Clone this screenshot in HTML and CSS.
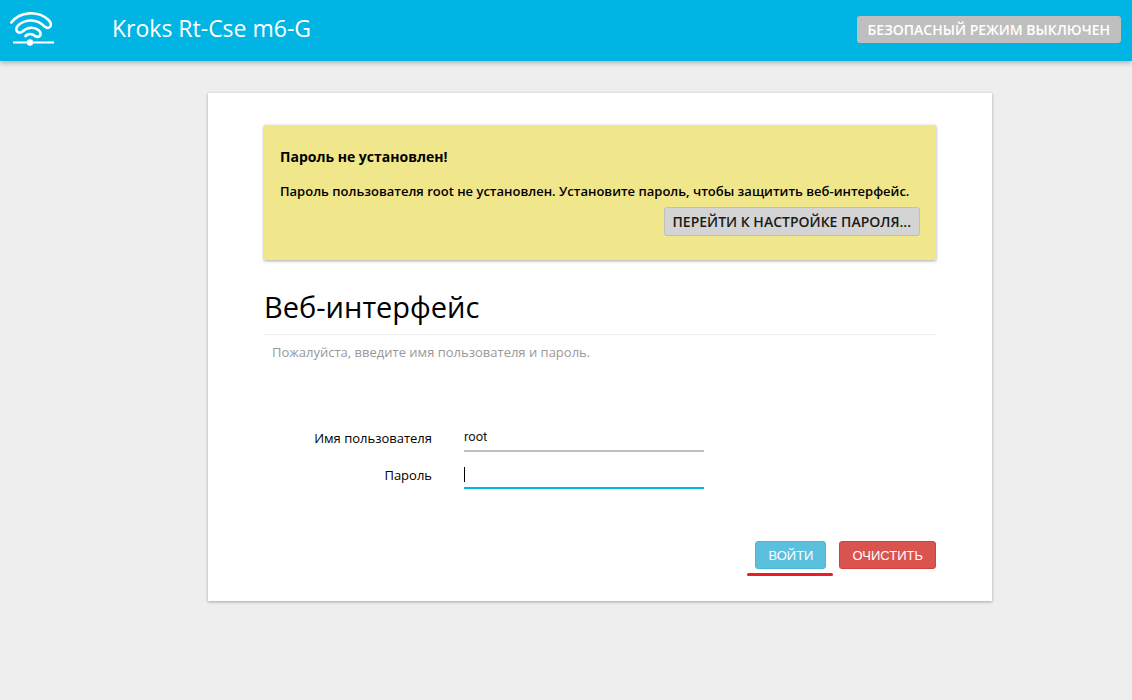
FILE: index.html
```html
<!DOCTYPE html>
<html lang="ru">
<head>
<meta charset="utf-8">
<meta name="viewport" content="width=device-width, initial-scale=1">
<title>Kroks Rt-Cse m6-G</title>
<link rel="stylesheet" href="styles.css">
</head>
<body>
<header class="topbar">
  <svg class="logo" viewBox="0 0 48 36" aria-hidden="true">
    <g fill="none" stroke="#fff" stroke-width="2.6" stroke-linecap="round" stroke-linejoin="round">
      <path d="M2.300 12.500C11 1.200 29 0.200 39.500 10C44.500 15 40.500 20.500 35.500 16.500C28 9 17.500 8.700 9.500 15C5 19.500 8.500 25 13.500 21.500C18.500 16.700 25.500 16.700 30 20.500C33.500 24.500 30.500 28.500 26 26C23 23.500 19 23.500 16.500 26"/>
      <path stroke-width="2" stroke-linecap="butt" d="M4 32.500H45"/>
    </g>
    <circle cx="21" cy="32.500" r="3.200" fill="#fff"/>
  </svg>
  <a class="brand" href="#">Kroks Rt-Cse m6-G</a>
  <a class="mode" href="#">БЕЗОПАСНЫЙ РЕЖИМ ВЫКЛЮЧЕН</a>
</header>
<main class="page">
  <div class="card">
    <section class="alert">
      <h4 class="alert-title">Пароль не установлен!</h4>
      <p class="alert-text">Пароль пользователя root не установлен. Установите пароль, чтобы защитить веб-интерфейс.</p>
      <a class="alert-button" href="#">ПЕРЕЙТИ К НАСТРОЙКЕ ПАРОЛЯ...</a>
    </section>
    <form class="login">
      <h2 class="title">Веб-интерфейс</h2>
      <p class="hint">Пожалуйста, введите имя пользователя и пароль.</p>
      <div class="fields">
        <label class="label" for="user">Имя пользователя</label>
        <input class="input" id="user" type="text" value="root">
        <label class="label" for="password">Пароль</label>
        <input class="input input-active" id="password" type="password">
      </div>
      <div class="actions">
        <button class="button button-apply" type="submit">ВОЙТИ</button>
        <button class="button button-reset" type="reset">ОЧИСТИТЬ</button>
      </div>
    </form>
  </div>
</main>
</body>
</html>
```
FILE: styles.css
```css
* { box-sizing: border-box; }
body {
  margin: 0;
  min-height: 100vh;
  background: #eee;
  color: #000;
  font: 13px/20px "Open Sans", "Noto Sans", sans-serif;
}
.topbar {
  display: flex;
  align-items: center;
  padding: 10px 11px 15px 9px;
  background: #00b5e4;
  box-shadow: 0 2px 5px rgba(0, 0, 0, .26);
}
.logo { width: 48px; height: 36px; }
.brand {
  margin-left: 55px;
  color: #fff;
  font-size: 23px;
  line-height: 32px;
  text-decoration: none;
}
.mode {
  margin: 2px 0 0 auto;
  padding: 4px 11px 3px;
  border-radius: 3px;
  background: #bfbfbf;
  color: #fff;
  font-size: 14px;
  font-weight: 600;
  text-decoration: none;
}
.page { padding: 32px 140px 32px 208px; }
.card {
  padding: 32px 56px;
  background: #fff;
  box-shadow: 0 1px 3px rgba(0, 0, 0, .3);
}
.alert {
  display: flex;
  flex-direction: column;
  padding: 22px 16px 24px;
  background: #f0e68c;
  box-shadow: 0 1px 3px rgba(0, 0, 0, .35);
}
.alert-title { margin: 0 0 14px; font-size: 14px; font-weight: 700; }
.alert-text { margin: 0 0 6px; font-weight: 600; }
.alert-button {
  align-self: flex-end;
  padding: 4px 8px 3px;
  border: 1px solid #bfbfbf;
  border-radius: 3px;
  background: #d4d4d4;
  color: #1a1a1a;
  font-size: 14px;
  font-weight: 600;
  text-decoration: none;
}
.title {
  margin: 25px 0 7px;
  padding-bottom: 5px;
  border-bottom: 1px solid #eee;
  font-size: 29px;
  font-weight: 400;
  line-height: 44px;
}
.hint { margin: 0 8px; color: #999; }
.fields {
  display: grid;
  grid-template-columns: 168px 240px;
  gap: 8px 32px;
  margin-top: 61px;
}
.label { padding-top: 5px; text-align: right; }
.input {
  width: 100%;
  height: 29px;
  padding: 0;
  border: 0;
  border-bottom: 2px solid #bfbfbf;
  outline: 0;
  background: transparent;
  color: #1a1a1a;
  font: 13px Roboto, sans-serif;
}
.input-active {
  border-bottom-color: #00b5e4;
  background: linear-gradient(#000, #000) 0 7px / 1px 15px no-repeat;
}
.actions { display: flex; justify-content: flex-end; gap: 13px; margin-top: 52px; }
.button {
  position: relative;
  height: 28px;
  padding: 0 12px;
  border: 1px solid;
  border-radius: 3px;
  color: #fff;
  font: 13px "Liberation Sans", Arial, sans-serif;
}
.button-apply { background: #5bc0de; border-color: #46b8da; }
.button-apply::after {
  content: "";
  position: absolute;
  right: -8px;
  bottom: -8px;
  left: -9px;
  height: 3px;
  border-radius: 2px;
  background: #ed1c24;
}
.button-reset { background: #d9534f; border-color: #d43f3a; }
```
